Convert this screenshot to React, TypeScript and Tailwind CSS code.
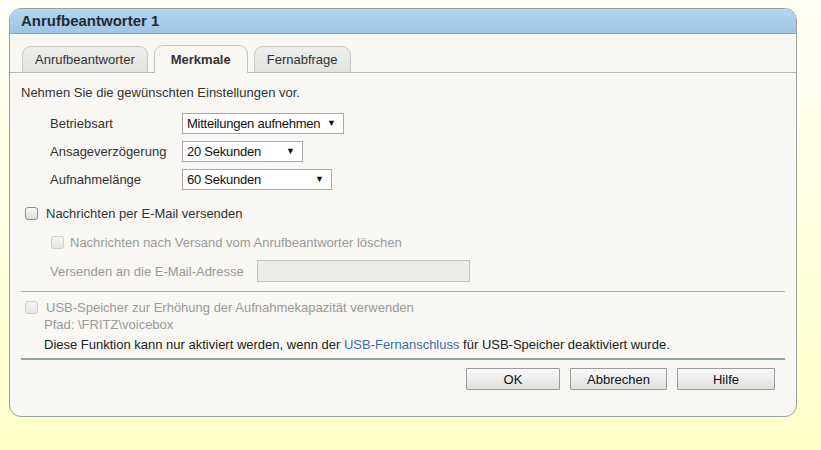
import React from "react";

const font = { fontFamily: '"Liberation Sans", Arial, sans-serif' };

function Select({ value, width }: { value: string; width: string }) {
  return (
    <div
      className={`${width} h-[21px] flex items-center justify-between whitespace-nowrap border border-[#a9a9a9] bg-white pl-[4px] pr-[7px] text-[13px] text-[#111]`}
    >
      <span className="tracking-[-0.25px]">{value}</span>
      <span className="text-[9px] leading-none">▼</span>
    </div>
  );
}

function Checkbox({ disabled }: { disabled?: boolean }) {
  return (
    <span
      className={`inline-block w-[13px] h-[13px] rounded-[3px] border ${
        disabled
          ? "border-[#cfcfcf] bg-gradient-to-b from-[#f4f4f4] to-[#e6e6e6]"
          : "border-[#8f8f8f] bg-gradient-to-b from-[#fafafa] to-[#dcdcdc]"
      }`}
    />
  );
}

function Tab({ label, active }: { label: string; active?: boolean }) {
  if (active) {
    return (
      <div className="h-[28px] -mb-px px-[16px] flex items-center rounded-t-[9px] border border-b-0 border-[#c2c6c6] bg-[#f8f7f3] text-[13px] font-bold text-[#333]">
        {label}
      </div>
    );
  }
  return (
    <div className="h-[26px] px-[12px] flex items-center rounded-t-[9px] border border-b-0 border-[#c6c8c8] bg-gradient-to-b from-[#eeeeec] to-[#e2e2e0] text-[13px] text-[#333]">
      {label}
    </div>
  );
}

function Button({ label, width }: { label: string; width: string }) {
  return (
    <div
      className={`${width} h-[22px] flex items-center justify-center border border-[#9a9a9a] rounded-[1px] bg-gradient-to-b from-[#fbfbfb] to-[#dedede] text-[13px] text-[#111]`}
    >
      {label}
    </div>
  );
}

export default function App() {
  return (
    <div
      style={font}
      className="w-[821px] h-[450px] overflow-hidden bg-gradient-to-b from-[#fffff6] to-[#ffffc9] pt-[8px] pl-[9px]"
    >
      <div className="w-[788px] h-[409px] rounded-[12px] border border-[#97a3a3] bg-[#f8f7f3] overflow-hidden flex flex-col">
        {/* title bar */}
        <div className="h-[25px] shrink-0 flex items-center px-[11px] border-b border-[#8ea6b6] bg-gradient-to-b from-[#b3d6f2] to-[#9fc4e2] text-[15px] font-bold text-[#1d2b36]">
          Anrufbeantworter 1
        </div>

        {/* tabs */}
        <div className="mt-[11px] flex items-end gap-[6px] pl-[12px] border-b border-[#b4b8b8]">
          <Tab label="Anrufbeantworter" />
          <Tab label="Merkmale" active />
          <Tab label="Fernabfrage" />
        </div>

        <div className="px-[11px] text-[13px] leading-[17px] text-[#333]">
          <p className="mt-[11px]">Nehmen Sie die gewünschten Einstellungen vor.</p>

          <div className="mt-[12px] pl-[29px] flex flex-col gap-[7px]">
            <div className="flex items-center">
              <span className="w-[132px]">Betriebsart</span>
              <Select value="Mitteilungen aufnehmen" width="w-[162px]" />
            </div>
            <div className="flex items-center">
              <span className="w-[132px]">Ansageverzögerung</span>
              <Select value="20 Sekunden" width="w-[121px]" />
            </div>
            <div className="flex items-center">
              <span className="w-[132px]">Aufnahmelänge</span>
              <Select value="60 Sekunden" width="w-[150px]" />
            </div>
          </div>

          <label className="mt-[15px] pl-[4px] flex items-center gap-[8px]">
            <Checkbox />
            <span>Nachrichten per E-Mail versenden</span>
          </label>

          <div className="pl-[29px] text-[#9a9a9a]">
            <label className="mt-[12px] pl-[1px] flex items-center gap-[6px]">
              <Checkbox disabled />
              <span>Nachrichten nach Versand vom Anrufbeantworter löschen</span>
            </label>
            <div className="mt-[9px] flex items-center">
              <span className="w-[207px]">Versenden an die E-Mail-Adresse</span>
              <div className="w-[213px] h-[22px] border border-[#c4c4c0] bg-[#ebebe7]" />
            </div>
          </div>

          <div className="mt-[9px] border-t border-[#a6abab]" />

          <div className="mt-[7px] pl-[4px]">
            <label className="flex items-center gap-[8px] text-[#9a9a9a]">
              <Checkbox disabled />
              <span>USB-Speicher zur Erhöhung der Aufnahmekapazität verwenden</span>
            </label>
            <div className="pl-[19px] text-[#9a9a9a]">Pfad: \FRITZ\voicebox</div>
            <div className="pl-[19px] mt-[3px] text-[#222]">
              Diese Funktion kann nur aktiviert werden, wenn der{" "}
              <span className="text-[#3b6ea8]">USB-Fernanschluss</span> für USB-Speicher deaktiviert wurde.
            </div>
          </div>

          <div className="mt-[5px] border-t-2 border-[#8fa89e]" />

          <div className="mt-[8px] pr-[10px] flex justify-end gap-[10px]">
            <Button label="OK" width="w-[94px]" />
            <Button label="Abbrechen" width="w-[97px]" />
            <Button label="Hilfe" width="w-[98px]" />
          </div>
        </div>
      </div>
    </div>
  );
}
